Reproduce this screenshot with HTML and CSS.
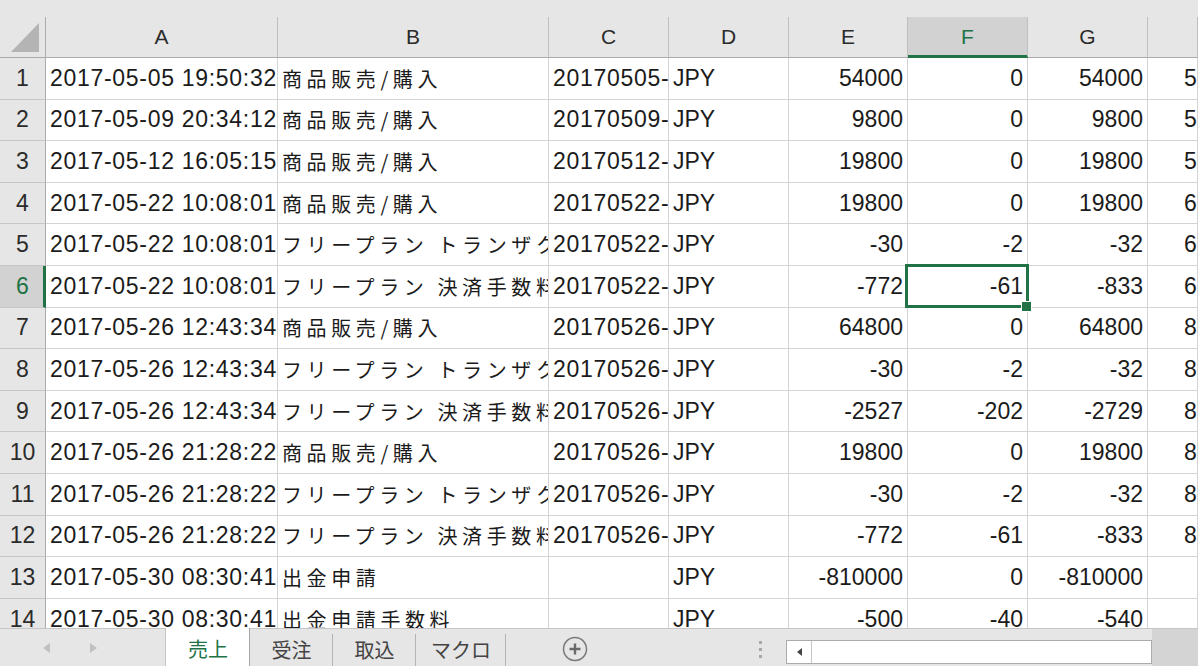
FILE: index.html
```html
<!DOCTYPE html>
<html lang="ja">
<head>
  <meta charset="UTF-8" />
  <title>売上 - Excel</title>
  <link rel="stylesheet" href="styles.css">
</head>
<body>
  <div class="sheet">
    <div class="topgap"></div>

    <!-- column headers -->
    <div class="colheads">
      <div class="corner">
        <svg width="28" height="29" viewBox="0 0 28 29"><polygon points="0,29 28,29 28,0" fill="#b4b4b4"/></svg>
      </div>
      <div class="ch">A</div>
      <div class="ch">B</div>
      <div class="ch">C</div>
      <div class="ch">D</div>
      <div class="ch">E</div>
      <div class="ch sel">F</div>
      <div class="ch">G</div>
      <div class="ch"></div>
    </div>

    <!-- cells -->
    <div class="cells">
      <div class="rh">1</div><div class="c t">2017-05-05 19:50:32</div><div class="c"><span class="ja">商品販売/購入</span></div><div class="c t">20170505-</div><div class="c">JPY</div><div class="c n">54000</div><div class="c n">0</div><div class="c n">54000</div><div class="c h">5</div>
      <div class="rh">2</div><div class="c t">2017-05-09 20:34:12</div><div class="c"><span class="ja">商品販売/購入</span></div><div class="c t">20170509-</div><div class="c">JPY</div><div class="c n">9800</div><div class="c n">0</div><div class="c n">9800</div><div class="c h">5</div>
      <div class="rh">3</div><div class="c t">2017-05-12 16:05:15</div><div class="c"><span class="ja">商品販売/購入</span></div><div class="c t">20170512-</div><div class="c">JPY</div><div class="c n">19800</div><div class="c n">0</div><div class="c n">19800</div><div class="c h">5</div>
      <div class="rh">4</div><div class="c t">2017-05-22 10:08:01</div><div class="c"><span class="ja">商品販売/購入</span></div><div class="c t">20170522-</div><div class="c">JPY</div><div class="c n">19800</div><div class="c n">0</div><div class="c n">19800</div><div class="c h">6</div>
      <div class="rh">5</div><div class="c t">2017-05-22 10:08:01</div><div class="c"><span class="ja">フリープラン トランザクション手数料</span></div><div class="c t">20170522-</div><div class="c">JPY</div><div class="c n">-30</div><div class="c n">-2</div><div class="c n">-32</div><div class="c h">6</div>
      <div class="rh sel">6</div><div class="c t">2017-05-22 10:08:01</div><div class="c"><span class="ja">フリープラン 決済手数料</span></div><div class="c t">20170522-</div><div class="c">JPY</div><div class="c n">-772</div><div class="c n sel">-61</div><div class="c n">-833</div><div class="c h">6</div>
      <div class="rh">7</div><div class="c t">2017-05-26 12:43:34</div><div class="c"><span class="ja">商品販売/購入</span></div><div class="c t">20170526-</div><div class="c">JPY</div><div class="c n">64800</div><div class="c n">0</div><div class="c n">64800</div><div class="c h">8</div>
      <div class="rh">8</div><div class="c t">2017-05-26 12:43:34</div><div class="c"><span class="ja">フリープラン トランザクション手数料</span></div><div class="c t">20170526-</div><div class="c">JPY</div><div class="c n">-30</div><div class="c n">-2</div><div class="c n">-32</div><div class="c h">8</div>
      <div class="rh">9</div><div class="c t">2017-05-26 12:43:34</div><div class="c"><span class="ja">フリープラン 決済手数料</span></div><div class="c t">20170526-</div><div class="c">JPY</div><div class="c n">-2527</div><div class="c n">-202</div><div class="c n">-2729</div><div class="c h">8</div>
      <div class="rh">10</div><div class="c t">2017-05-26 21:28:22</div><div class="c"><span class="ja">商品販売/購入</span></div><div class="c t">20170526-</div><div class="c">JPY</div><div class="c n">19800</div><div class="c n">0</div><div class="c n">19800</div><div class="c h">8</div>
      <div class="rh">11</div><div class="c t">2017-05-26 21:28:22</div><div class="c"><span class="ja">フリープラン トランザクション手数料</span></div><div class="c t">20170526-</div><div class="c">JPY</div><div class="c n">-30</div><div class="c n">-2</div><div class="c n">-32</div><div class="c h">8</div>
      <div class="rh">12</div><div class="c t">2017-05-26 21:28:22</div><div class="c"><span class="ja">フリープラン 決済手数料</span></div><div class="c t">20170526-</div><div class="c">JPY</div><div class="c n">-772</div><div class="c n">-61</div><div class="c n">-833</div><div class="c h">8</div>
      <div class="rh">13</div><div class="c t">2017-05-30 08:30:41</div><div class="c"><span class="ja">出金申請</span></div><div class="c"></div><div class="c">JPY</div><div class="c n">-810000</div><div class="c n">0</div><div class="c n">-810000</div><div class="c h"></div>
      <div class="rh">14</div><div class="c t">2017-05-30 08:30:41</div><div class="c"><span class="ja">出金申請手数料</span></div><div class="c"></div><div class="c">JPY</div><div class="c n">-500</div><div class="c n">-40</div><div class="c n">-540</div><div class="c h"></div>
    </div>

    <!-- sheet tabs + scrollbar -->
    <div class="tabbar">
      <div class="nav">
        <span class="arrow left"></span>
        <span class="arrow right"></span>
      </div>
      <div class="tab active">売上</div>
      <div class="tab">受注</div>
      <div class="tab">取込</div>
      <div class="tab wide">マクロ</div>
      <div class="add">
        <svg width="26" height="26" viewBox="0 0 26 26">
          <circle cx="13" cy="13" r="11.5" fill="none" stroke="#7a7a7a" stroke-width="1.5"/>
          <path d="M13 7.5v11M7.5 13h11" stroke="#6a6a6a" stroke-width="2.4"/>
        </svg>
      </div>
      <div class="dots"><i></i><i></i><i></i></div>
      <div class="hscroll">
        <div class="hbtn"><span class="tri"></span></div>
        <div class="thumb"></div>
      </div>
      <div class="scorner"></div>
    </div>
  </div>
</body>
</html>
```

FILE: styles.css
```css
* {
  box-sizing: border-box;
}

body {
  margin: 0;
  background: #e6e6e6;
  font-family: "Liberation Sans", "Noto Sans CJK JP", sans-serif;
  color: #1b1b1b;
  overflow: hidden;
}

.sheet {
  display: flex;
  flex-direction: column;
  width: 1198px;
  height: 666px;
  overflow: hidden;
}

.topgap {
  flex: none;
  height: 17px;
  background: #e6e6e6;
}

.colheads,
.cells {
  display: grid;
  grid-template-columns: 46px 232px 271px 120px 120px 119px 120px 120px 1fr;
}

.colheads {
  flex: none;
  height: 41px;
  background: #e6e6e6;
}

.corner {
  display: flex;
  align-items: flex-end;
  justify-content: flex-end;
  padding: 0 6px 5px 0;
  border-right: 1px solid #ababab;
  border-bottom: 1px solid #ababab;
}

.corner svg {
  display: block;
}

.ch {
  display: flex;
  align-items: center;
  justify-content: center;
  font-size: 21px;
  color: #2b2b2b;
  border-right: 1px solid #bfbfbf;
  border-bottom: 1px solid #ababab;
}

.ch.sel {
  background: #d2d2d2;
  color: #217346;
  border-bottom: 3px solid #217346;
  padding-top: 2px;
}

.cells {
  flex: 1;
  grid-auto-rows: 41.6px;
  align-content: start;
  overflow: hidden;
  background: #fff;
}

.rh {
  display: flex;
  align-items: center;
  justify-content: center;
  background: #e6e6e6;
  color: #2b2b2b;
  font-size: 23px;
  border-right: 1px solid #ababab;
  border-bottom: 1px solid #c6c6c6;
}

.rh.sel {
  background: #d2d2d2;
  color: #217346;
  border-right: 3px solid #217346;
  padding-left: 2px;
}

.c {
  display: flex;
  align-items: center;
  padding: 0 4px;
  font-size: 23px;
  white-space: nowrap;
  overflow: hidden;
  background: #fff;
  border-right: 1px solid #d4d4d4;
  border-bottom: 1px solid #d4d4d4;
}

.c.t {
  letter-spacing: 0.7px;
}

.c.n {
  justify-content: flex-end;
}

.c.h {
  padding-left: 36px;
}

.ja {
  font-family: "Noto Sans CJK JP", sans-serif;
  font-size: 20px;
  letter-spacing: 4.6px;
}

/* active cell */
.c.sel {
  position: relative;
  overflow: visible;
  z-index: 2;
}

.c.sel::after {
  content: "";
  position: absolute;
  top: -2px;
  right: -2px;
  bottom: -1px;
  left: -3px;
  border: 3px solid #217346;
}

.c.sel::before {
  content: "";
  position: absolute;
  right: -5px;
  bottom: -5px;
  width: 9px;
  height: 9px;
  background: #217346;
  border: 1px solid #fff;
  z-index: 1;
}

/* tab bar */
.tabbar {
  flex: none;
  display: flex;
  height: 38px;
  background: #e6e6e6;
  border-top: 1px solid #c6c6c6;
}

.nav {
  flex: none;
  width: 166px;
  display: flex;
  align-items: center;
  padding-left: 43px;
  gap: 40px;
  border-right: 1px solid #c6c6c6;
}

.arrow {
  width: 0;
  height: 0;
  border-top: 5px solid transparent;
  border-bottom: 5px solid transparent;
}

.arrow.left {
  border-right: 7px solid #c0c0c0;
}

.arrow.right {
  border-left: 7px solid #c0c0c0;
}

.tab {
  flex: none;
  position: relative;
  width: 83px;
  display: flex;
  align-items: center;
  justify-content: center;
  padding-top: 3px;
  font-family: "Noto Sans CJK JP", sans-serif;
  font-size: 20px;
  color: #444;
}

.tab::after {
  content: "";
  position: absolute;
  top: 5px;
  right: 0;
  bottom: 0;
  width: 1px;
  background: #b4b4b4;
}

.tab.wide {
  width: 90px;
}

.tab.active {
  width: 84px;
  margin-top: -1px;
  background: #fff;
  color: #217346;
}

.tab.active::after {
  top: 0;
  background: #a6a6a6;
}

.add {
  flex: none;
  margin-left: 56px;
  display: flex;
  align-items: center;
  padding-top: 3px;
}

.add svg {
  display: block;
}

.dots {
  flex: none;
  margin-left: 171px;
  display: flex;
  flex-direction: column;
  justify-content: center;
  gap: 4px;
  padding-top: 3px;
}

.dots i {
  display: block;
  width: 3px;
  height: 3px;
  background: #a8a8a8;
}

.hscroll {
  flex: none;
  display: flex;
  width: 366px;
  height: 24px;
  margin: 11px 0 0 24px;
  background: #fff;
  border: 1px solid #ababab;
}

.hbtn {
  flex: none;
  width: 25px;
  display: flex;
  align-items: center;
  justify-content: center;
  border-right: 1px solid #c6c6c6;
}

.tri {
  width: 0;
  height: 0;
  border-top: 4px solid transparent;
  border-bottom: 4px solid transparent;
  border-right: 5px solid #444;
}

.thumb {
  flex: 1;
}

.scorner {
  flex: 1;
  background: #d4d4d4;
}
```
